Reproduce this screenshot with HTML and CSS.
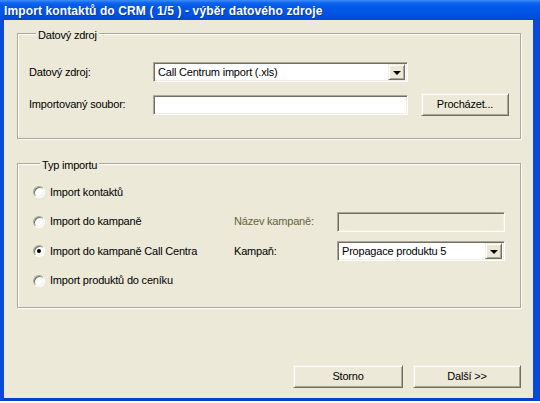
FILE: index.html
```html
<!DOCTYPE html>
<html lang="cs">
<head>
<meta charset="utf-8">
<title>Import kontaktů do CRM</title>
<link rel="stylesheet" href="styles.css">
</head>
<body>
<div class="window">
  <div class="titlebar">Import kontaktů do CRM ( 1/5 ) - výběr datového zdroje</div>
  <div class="client">
    <div class="group group-source">
      <div class="group-title">Datový zdroj</div>
      <div class="source-grid">
        <span class="lbl">Datový zdroj:</span>
        <div class="field combo">
          <span class="combo-text">Call Centrum import (.xls)</span>
          <span class="combo-btn"><span class="arrow"></span></span>
        </div>
        <span></span>
        <span class="lbl">Importovaný soubor:</span>
        <div class="field"></div>
        <button class="btn btn-browse">Procházet...</button>
      </div>
    </div>

    <div class="group group-type">
      <div class="group-title">Typ importu</div>
      <div class="type-grid">
        <div class="opt"><span class="radio"></span><span>Import kontaktů</span></div>
        <span></span>
        <span></span>

        <div class="opt"><span class="radio"></span><span>Import do kampaně</span></div>
        <span class="lbl lbl-disabled">Název kampaně:</span>
        <div class="field field-disabled"></div>

        <div class="opt"><span class="radio radio-checked"></span><span>Import do kampaně Call Centra</span></div>
        <span class="lbl">Kampaň:</span>
        <div class="field combo">
          <span class="combo-text">Propagace produktu 5</span>
          <span class="combo-btn"><span class="arrow"></span></span>
        </div>

        <div class="opt"><span class="radio"></span><span>Import produktů do ceníku</span></div>
        <span></span>
        <span></span>
      </div>
    </div>

    <div class="actions">
      <button class="btn btn-cancel">Storno</button>
      <button class="btn btn-next">Další &gt;&gt;</button>
    </div>
  </div>
</div>
</body>
</html>
```

FILE: styles.css
```css
* { box-sizing: border-box; }

html, body {
  margin: 0;
  padding: 0;
  background: #ffffff;
}

body {
  font-family: "Liberation Sans", Arial, sans-serif;
  font-size: 11px;
  letter-spacing: -0.2px;
  color: #000;
}

.window {
  width: 540px;
  height: 401px;
  display: flex;
  flex-direction: column;
}

.titlebar {
  height: 20px;
  padding: 2px 0 0 4px;
  line-height: 18px;
  font-size: 12px;
  font-weight: bold;
  letter-spacing: 0.12px;
  color: #fff;
  text-shadow: 1px 1px 0 #0a3aa8;
  white-space: nowrap;
  background: linear-gradient(#3d8ef8 0, #0f63ef 3px, #0058e8 7px, #0055e4 60%, #0049d8 100%);
}

.client {
  flex: 1;
  display: flex;
  flex-direction: column;
  background: #ece9d8;
  border-left: 4px solid #0a4ada;
  border-right: 7px solid #0a4ada;
  border-bottom: 3px solid #0a3fcc;
  padding: 13px 12px 10px 13px;
}

/* etched group box */
.group {
  border: 1px solid #aca899;
  box-shadow: 1px 1px 0 #fff, inset 1px 1px 0 #fff;
}

.group-title {
  display: table;
  margin: -5px 0 0 7px;
  padding: 0 2px;
  line-height: 13px;
  background: #ece9d8;
}

.group-source {
  padding: 0 0 22px 11px;
}

.source-grid {
  margin-top: 20px;
  display: grid;
  grid-template-columns: 124px 255px 101px;
  grid-template-rows: 20px 23px;
  row-gap: 11px;
}

.lbl {
  line-height: 13px;
  align-self: center;
  white-space: nowrap;
}

.lbl-disabled {
  color: #66623f;
}

/* sunken field */
.field {
  height: 20px;
  align-self: center;
  background: #fff;
  border: 1px solid;
  border-color: #aca899 #fff #fff #aca899;
  box-shadow: inset 1px 1px 0 #716f64, inset -1px -1px 0 #f1efe2;
}

.field-disabled {
  background: #ece9d8;
}

.combo {
  display: flex;
  align-items: center;
  padding: 2px 2px 2px 4px;
}

.combo-text {
  flex: 1;
  line-height: 13px;
  white-space: nowrap;
}

.combo-btn {
  width: 17px;
  height: 16px;
  display: flex;
  align-items: center;
  justify-content: center;
  background: #ece9d8;
  border: 1px solid;
  border-color: #f1efe2 #716f64 #716f64 #f1efe2;
  box-shadow: inset 1px 1px 0 #fff, inset -1px -1px 0 #aca899;
}

.arrow {
  width: 0;
  height: 0;
  border-left: 4px solid transparent;
  border-right: 4px solid transparent;
  border-top: 4px solid #000;
  margin-top: 1px;
}

/* raised push button */
.btn {
  font: inherit;
  letter-spacing: inherit;
  color: #000;
  height: 23px;
  padding: 0;
  background: #ece9d8;
  border: 1px solid;
  border-color: #f1efe2 #716f64 #716f64 #f1efe2;
  box-shadow: inset 1px 1px 0 #fff, inset -1px -1px 0 #aca899;
  line-height: 19px;
}

.btn-browse {
  width: 88px;
  justify-self: end;
}

.group-type {
  margin-top: 24px;
  padding: 0 0 16.5px 15px;
}

.type-grid {
  margin-top: 10px;
  display: grid;
  grid-template-columns: 201px 103px 168px;
  grid-auto-rows: 20px;
  row-gap: 9.5px;
}

.opt {
  display: flex;
  align-items: center;
  gap: 5px;
  line-height: 13px;
  white-space: nowrap;
}

.radio {
  width: 12px;
  height: 12px;
  flex: none;
  border-radius: 50%;
  background: #fff;
  border: 1px solid;
  border-color: #aca899 #fff #fff #aca899;
  box-shadow: inset 1px 1px 0 #716f64, inset -1px -1px 0 #f1efe2;
  display: flex;
  align-items: center;
  justify-content: center;
}

.radio-checked::after {
  content: "";
  width: 4px;
  height: 4px;
  border-radius: 50%;
  background: #000;
}

.actions {
  margin-top: auto;
  display: flex;
  justify-content: flex-end;
  gap: 10px;
}

.btn-cancel {
  width: 110px;
}

.btn-next {
  width: 108px;
}
```
